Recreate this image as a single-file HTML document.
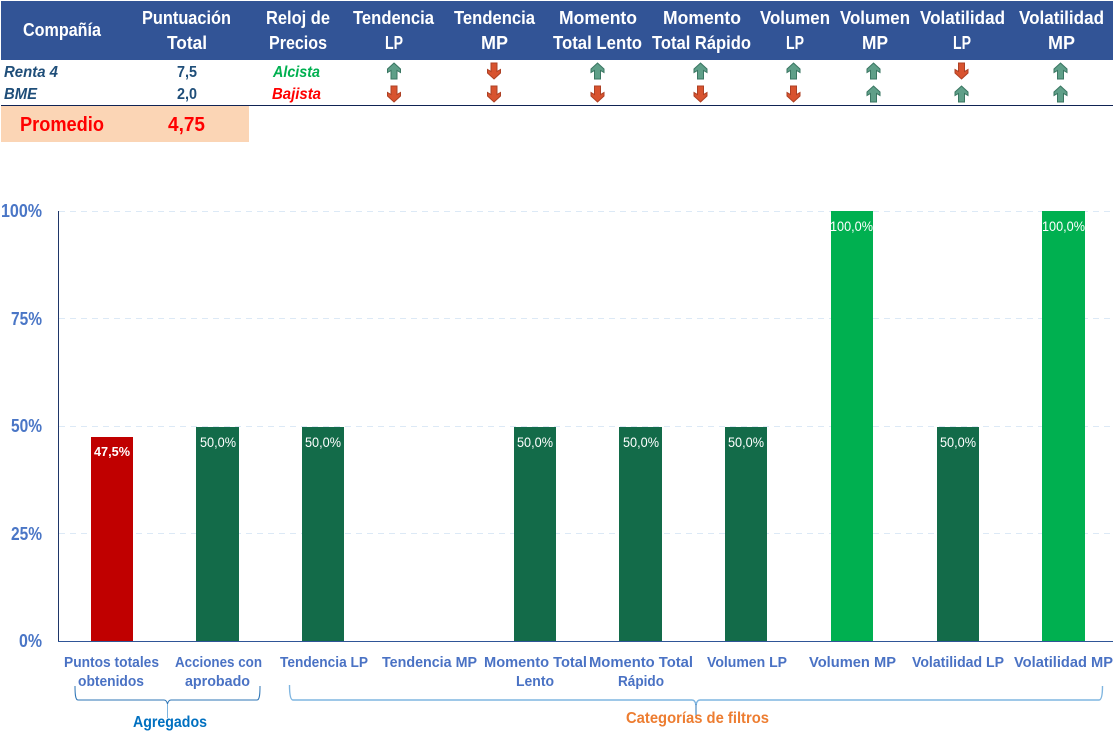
<!DOCTYPE html>
<html lang="es">
<head>
<meta charset="utf-8">
<title>Resumen</title>
<style>
html,body{margin:0;padding:0;background:#fff;}
body{width:1113px;height:742px;overflow:hidden;}
svg{display:block;}
text{font-family:"Liberation Sans",sans-serif;}
.h{font-size:18px;font-weight:700;fill:#fff;}
.b{font-size:15.5px;font-weight:700;fill:#1F4E79;}
.i{font-style:italic;}
.y{font-size:18px;font-weight:700;fill:#4A76C6;}
.c{font-size:14.5px;font-weight:700;fill:#4A72C4;}
.d{font-size:14px;fill:#fff;}
</style>
</head>
<body>
<svg width="1113" height="742" viewBox="0 0 1113 742" xmlns="http://www.w3.org/2000/svg">
<defs>
<g id="u"><path d="M0 -8L6.5 -2V1.5L3 -0.5V8H-3V-0.5L-6.5 1.5V-2Z" fill="#5F9F88" stroke="#3A7662" stroke-width="1"/></g>
<g id="n"><path d="M0 8L6.5 2V-1.5L3 0.5V-8H-3V0.5L-6.5 -1.5V2Z" fill="#D8532F" stroke="#AD4024" stroke-width="1"/></g>
</defs>
<rect width="1113" height="742" fill="#fff"/>

<!-- header -->
<rect x="1" y="1" width="1112" height="59" fill="#325496"/>
<text class="h" x="23" y="36" textLength="78" lengthAdjust="spacingAndGlyphs">Compañía</text>
<text class="h" x="142" y="24" textLength="89" lengthAdjust="spacingAndGlyphs">Puntuación</text>
<text class="h" x="167" y="49" textLength="40" lengthAdjust="spacingAndGlyphs">Total</text>
<text class="h" x="266" y="24" textLength="64" lengthAdjust="spacingAndGlyphs">Reloj de</text>
<text class="h" x="269" y="49" textLength="58" lengthAdjust="spacingAndGlyphs">Precios</text>
<text class="h" x="353" y="24" textLength="81" lengthAdjust="spacingAndGlyphs">Tendencia</text>
<text class="h" x="385" y="49" textLength="18" lengthAdjust="spacingAndGlyphs">LP</text>
<text class="h" x="454" y="24" textLength="81" lengthAdjust="spacingAndGlyphs">Tendencia</text>
<text class="h" x="481" y="49" textLength="27" lengthAdjust="spacingAndGlyphs">MP</text>
<text class="h" x="559" y="24" textLength="78" lengthAdjust="spacingAndGlyphs">Momento</text>
<text class="h" x="553" y="49" textLength="89" lengthAdjust="spacingAndGlyphs">Total Lento</text>
<text class="h" x="663" y="24" textLength="78" lengthAdjust="spacingAndGlyphs">Momento</text>
<text class="h" x="652" y="49" textLength="99" lengthAdjust="spacingAndGlyphs">Total Rápido</text>
<text class="h" x="760" y="24" textLength="70" lengthAdjust="spacingAndGlyphs">Volumen</text>
<text class="h" x="786" y="49" textLength="18" lengthAdjust="spacingAndGlyphs">LP</text>
<text class="h" x="840" y="24" textLength="70" lengthAdjust="spacingAndGlyphs">Volumen</text>
<text class="h" x="862" y="49" textLength="26" lengthAdjust="spacingAndGlyphs">MP</text>
<text class="h" x="920" y="24" textLength="85" lengthAdjust="spacingAndGlyphs">Volatilidad</text>
<text class="h" x="953" y="49" textLength="18" lengthAdjust="spacingAndGlyphs">LP</text>
<text class="h" x="1019" y="24" textLength="85" lengthAdjust="spacingAndGlyphs">Volatilidad</text>
<text class="h" x="1048" y="49" textLength="27" lengthAdjust="spacingAndGlyphs">MP</text>

<!-- rows -->
<text class="b i" x="4" y="77" textLength="54" lengthAdjust="spacingAndGlyphs">Renta 4</text>
<text class="b i" x="4" y="99" textLength="33" lengthAdjust="spacingAndGlyphs">BME</text>
<text class="b" x="177" y="77" textLength="20" lengthAdjust="spacingAndGlyphs">7,5</text>
<text class="b" x="177" y="99" textLength="20" lengthAdjust="spacingAndGlyphs">2,0</text>
<text class="b i" x="273" y="77" textLength="47" lengthAdjust="spacingAndGlyphs" style="fill:#00B050">Alcista</text>
<text class="b i" x="272" y="99" textLength="49" lengthAdjust="spacingAndGlyphs" style="fill:#FF0000">Bajista</text>

<use href="#u" x="394" y="71"/><use href="#n" x="494" y="71"/><use href="#u" x="597.5" y="71"/><use href="#u" x="700.5" y="71"/><use href="#u" x="793.5" y="71"/><use href="#u" x="873.5" y="71"/><use href="#n" x="961.5" y="71"/><use href="#u" x="1060.5" y="71"/>
<use href="#n" x="394" y="94"/><use href="#n" x="494" y="94"/><use href="#n" x="597.5" y="94"/><use href="#n" x="700.5" y="94"/><use href="#n" x="793.5" y="94"/><use href="#u" x="873.5" y="94"/><use href="#u" x="961.5" y="94"/><use href="#u" x="1060.5" y="94"/>

<rect x="1" y="105" width="1112" height="1" fill="#0F2354"/>

<!-- average -->
<rect x="1" y="106" width="248" height="36" fill="#FBD5B5"/>
<text x="20" y="131" font-size="20" font-weight="700" fill="#FF0000" textLength="84" lengthAdjust="spacingAndGlyphs">Promedio</text>
<text x="168" y="131" font-size="20" font-weight="700" fill="#FF0000" textLength="37" lengthAdjust="spacingAndGlyphs">4,75</text>

<!-- grid -->
<g stroke="#DCE9F6" stroke-width="1" stroke-dasharray="6 5">
<line x1="59" x2="1113" y1="211.5" y2="211.5"/>
<line x1="59" x2="1113" y1="318.5" y2="318.5"/>
<line x1="59" x2="1113" y1="426.5" y2="426.5"/>
<line x1="59" x2="1113" y1="533.5" y2="533.5"/>
</g>

<!-- y labels -->
<text class="y" x="1" y="217" textLength="41" lengthAdjust="spacingAndGlyphs">100%</text>
<text class="y" x="11" y="325" textLength="31" lengthAdjust="spacingAndGlyphs">75%</text>
<text class="y" x="11" y="432" textLength="31" lengthAdjust="spacingAndGlyphs">50%</text>
<text class="y" x="11" y="540" textLength="31" lengthAdjust="spacingAndGlyphs">25%</text>
<text class="y" x="19" y="647" textLength="23" lengthAdjust="spacingAndGlyphs">0%</text>

<!-- bars -->
<rect x="91" y="437" width="42" height="204" fill="#C00000"/>
<rect x="196" y="427" width="43" height="214" fill="#136B49"/>
<rect x="302" y="427" width="42" height="214" fill="#136B49"/>
<rect x="514" y="427" width="42" height="214" fill="#136B49"/>
<rect x="619" y="427" width="43" height="214" fill="#136B49"/>
<rect x="725" y="427" width="42" height="214" fill="#136B49"/>
<rect x="831" y="211" width="42" height="430" fill="#00B050"/>
<rect x="937" y="427" width="42" height="214" fill="#136B49"/>
<rect x="1042" y="211" width="43" height="430" fill="#00B050"/>

<!-- axes -->
<rect x="58" y="211" width="1" height="431" fill="#1F3668"/>
<rect x="58" y="641" width="1055" height="1" fill="#2F5597"/>

<!-- data labels -->
<text x="94" y="456" font-size="13" font-weight="700" fill="#fff" textLength="36" lengthAdjust="spacingAndGlyphs">47,5%</text>
<text class="d" x="200" y="447" textLength="36" lengthAdjust="spacingAndGlyphs">50,0%</text>
<text class="d" x="305" y="447" textLength="36" lengthAdjust="spacingAndGlyphs">50,0%</text>
<text class="d" x="517" y="447" textLength="36" lengthAdjust="spacingAndGlyphs">50,0%</text>
<text class="d" x="623" y="447" textLength="36" lengthAdjust="spacingAndGlyphs">50,0%</text>
<text class="d" x="728" y="447" textLength="36" lengthAdjust="spacingAndGlyphs">50,0%</text>
<text class="d" x="940" y="447" textLength="36" lengthAdjust="spacingAndGlyphs">50,0%</text>
<text class="d" x="830" y="231" textLength="43" lengthAdjust="spacingAndGlyphs">100,0%</text>
<text class="d" x="1042" y="231" textLength="43" lengthAdjust="spacingAndGlyphs">100,0%</text>

<!-- category labels -->
<text class="c" x="64" y="667" textLength="95" lengthAdjust="spacingAndGlyphs">Puntos totales</text>
<text class="c" x="78" y="686" textLength="66" lengthAdjust="spacingAndGlyphs">obtenidos</text>
<text class="c" x="175" y="667" textLength="87" lengthAdjust="spacingAndGlyphs">Acciones con</text>
<text class="c" x="185" y="686" textLength="65" lengthAdjust="spacingAndGlyphs">aprobado</text>
<text class="c" x="280" y="667" textLength="88" lengthAdjust="spacingAndGlyphs">Tendencia LP</text>
<text class="c" x="382" y="667" textLength="95" lengthAdjust="spacingAndGlyphs">Tendencia MP</text>
<text class="c" x="484" y="667" textLength="103" lengthAdjust="spacingAndGlyphs">Momento Total</text>
<text class="c" x="516" y="686" textLength="38" lengthAdjust="spacingAndGlyphs">Lento</text>
<text class="c" x="589" y="667" textLength="104" lengthAdjust="spacingAndGlyphs">Momento Total</text>
<text class="c" x="618" y="686" textLength="46" lengthAdjust="spacingAndGlyphs">Rápido</text>
<text class="c" x="707" y="667" textLength="80" lengthAdjust="spacingAndGlyphs">Volumen LP</text>
<text class="c" x="809" y="667" textLength="87" lengthAdjust="spacingAndGlyphs">Volumen MP</text>
<text class="c" x="912" y="667" textLength="92" lengthAdjust="spacingAndGlyphs">Volatilidad LP</text>
<text class="c" x="1014" y="667" textLength="99" lengthAdjust="spacingAndGlyphs">Volatilidad MP</text>

<!-- braces -->
<path d="M75 686C75 692 75 700 78 700H164C166 700 167 702 167.5 704C168 702 169 700 171 700H257C260 700 260 692 260 686" fill="none" stroke="#2E75B6" stroke-width="1"/>
<path d="M167.5 704V718" fill="none" stroke="#7FB5E0" stroke-width="1"/>
<path d="M289.5 685C289.5 692 290 700 293 700H692C694 700 695.5 702 696 705C696.5 702 698 700 700 700H1099C1102 700 1102.5 692 1102.5 686" fill="none" stroke="#7FB5E0" stroke-width="1.4"/>
<path d="M696 704V718" fill="none" stroke="#2E75B6" stroke-width="1"/>

<text x="133" y="727" font-size="16" font-weight="700" fill="#0070C0" textLength="74" lengthAdjust="spacingAndGlyphs">Agregados</text>
<text x="626" y="723" font-size="16" font-weight="700" fill="#ED7D31" textLength="143" lengthAdjust="spacingAndGlyphs">Categorías de filtros</text>
</svg>
</body>
</html>
